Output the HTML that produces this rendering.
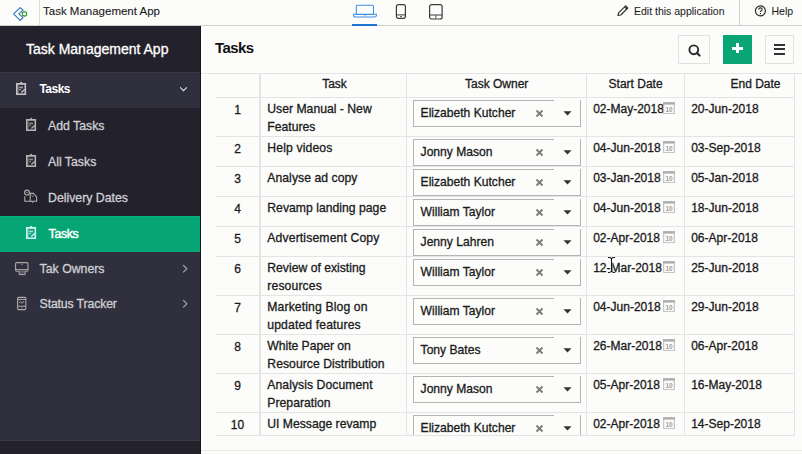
<!DOCTYPE html>
<html><head><meta charset="utf-8"><style>
html,body{margin:0;padding:0;width:802px;height:454px;overflow:hidden;background:#fcfcfa;}
body{position:relative;font-family:"Liberation Sans",sans-serif;}
.r{position:absolute;}
.t{position:absolute;white-space:nowrap;font-family:"Liberation Sans",sans-serif;}
</style></head><body>
<div class="r" style="left:0px;top:0px;width:802px;height:25px;background:#fcfcfa;"></div>
<div class="r" style="left:0px;top:25px;width:802px;height:1px;background:#cfcfcf;"></div>
<div class="r" style="left:39px;top:0px;width:1px;height:25px;background:#dcdcdc;"></div>
<div class="r" style="left:739px;top:0px;width:1px;height:25px;background:#cfcfcf;"></div>
<svg class="r" style="left:0px;top:0px" width="40" height="25" viewBox="0 0 40 25">
<path d="M20.2 7.6 L13.6 13.9 L20.2 20.3 L23.1 17.6 L18.8 13.9 L23.1 10.2 Z" fill="none" stroke="#2f74c4" stroke-width="1.1" stroke-linejoin="round"/>
<path d="M24.5 11.5 L26.6 12.7 L26.6 15.1 L24.5 16.3 L22.4 15.1 L22.4 12.7 Z" fill="none" stroke="#2e9e35" stroke-width="1.15"/>
</svg>
<div class="t" style="left:43px;top:6.27px;font-size:11.5px;line-height:11.5px;color:#1a1a1a;font-weight:400;letter-spacing:0px;-webkit-text-stroke:0.1px #1a1a1a;">Task Management App</div>
<svg class="r" style="left:352px;top:3px" width="26" height="16" viewBox="0 0 26 16">
<rect x="4.3" y="2.2" width="17.2" height="9.2" rx="1.2" fill="none" stroke="#3c8fe6" stroke-width="1.05"/>
<path d="M1.6 11.3 H24.4 V12.4 Q24.4 14 22.4 14 H3.6 Q1.6 14 1.6 12.4 Z" fill="none" stroke="#3c8fe6" stroke-width="1.05"/>
<rect x="11.5" y="11.4" width="3" height="0.9" fill="#3c8fe6"/>
</svg>
<div class="r" style="left:352px;top:24px;width:25px;height:2px;background:#1f73d2;"></div>
<svg class="r" style="left:395px;top:3px" width="12" height="17" viewBox="0 0 12 17">
<rect x="1.4" y="1.7" width="9" height="13.6" rx="2" fill="none" stroke="#3a3a3a" stroke-width="1.2"/>
<line x1="1.4" y1="11.9" x2="10.4" y2="11.9" stroke="#3a3a3a" stroke-width="1"/>
<rect x="5" y="13.2" width="2" height="0.9" fill="#3a3a3a"/>
</svg>
<svg class="r" style="left:428px;top:3px" width="16" height="17" viewBox="0 0 16 17">
<rect x="1.6" y="1.6" width="12.5" height="14.4" rx="2" fill="none" stroke="#3a3a3a" stroke-width="1.2"/>
<line x1="1.6" y1="12" x2="14.1" y2="12" stroke="#3a3a3a" stroke-width="1"/>
<rect x="7.4" y="12.2" width="0.9" height="3.3" fill="#3a3a3a"/>
</svg>
<svg class="r" style="left:616px;top:4px" width="14" height="13" viewBox="0 0 14 13">
<path d="M2 11.5 L2.6 8.8 L9.6 1.8 L11.8 4 L4.8 11 Z M8.6 2.8 L10.8 5" fill="none" stroke="#333" stroke-width="1.2" stroke-linejoin="round"/>
</svg>
<div class="t" style="left:634px;top:6.11px;font-size:10.5px;line-height:10.5px;color:#1a1a1a;font-weight:400;letter-spacing:0px;-webkit-text-stroke:0.05px #1a1a1a;">Edit this application</div>
<svg class="r" style="left:754px;top:5px" width="13" height="13" viewBox="0 0 13 13">
<circle cx="6.4" cy="5.9" r="5" fill="none" stroke="#2a2a2a" stroke-width="1.2"/>
<path d="M4.7 4.6 Q4.8 2.9 6.4 2.9 Q8.1 2.9 8.1 4.5 Q8.1 5.5 6.9 6 Q6.4 6.3 6.4 7.1" fill="none" stroke="#2a2a2a" stroke-width="1.1"/>
<rect x="5.8" y="8" width="1.2" height="1.2" fill="#2a2a2a"/>
</svg>
<div class="t" style="left:771.5px;top:6.11px;font-size:10.5px;line-height:10.5px;color:#1a1a1a;font-weight:400;letter-spacing:0px;-webkit-text-stroke:0.05px #1a1a1a;">Help</div>
<div class="r" style="left:0px;top:26px;width:201px;height:46px;background:#23222c;"></div>
<div class="r" style="left:0px;top:72px;width:201px;height:1px;background:#3a383d;"></div>
<div class="r" style="left:0px;top:73px;width:201px;height:35px;background:#302f3d;"></div>
<div class="r" style="left:0px;top:108px;width:201px;height:107px;background:#23222c;"></div>
<div class="r" style="left:0px;top:215px;width:201px;height:1px;background:#261d2a;"></div>
<div class="r" style="left:0px;top:216px;width:201px;height:36px;background:#05a673;"></div>
<div class="r" style="left:0px;top:216px;width:201px;height:1px;background:#02b27b;"></div>
<div class="r" style="left:0px;top:251px;width:201px;height:1px;background:#02b27b;"></div>
<div class="r" style="left:0px;top:252px;width:201px;height:1px;background:#33283a;"></div>
<div class="r" style="left:0px;top:253px;width:201px;height:187px;background:#302f3d;"></div>
<div class="r" style="left:0px;top:440px;width:201px;height:1px;background:#3e383d;"></div>
<div class="r" style="left:0px;top:441px;width:201px;height:13px;background:#23222c;"></div>
<div class="r" style="left:200px;top:26px;width:1px;height:428px;background:#15151f;"></div>
<div class="t" style="left:26px;top:41.75px;font-size:14px;line-height:14px;color:#ffffff;font-weight:400;letter-spacing:0px;-webkit-text-stroke:0.3px #ffffff;">Task Management App</div>
<svg class="r" style="left:15.2px;top:81px" width="13" height="15" viewBox="0 0 13 15"><rect x="1" y="2" width="10.1" height="12" fill="#c4c4c4"/><rect x="2.6" y="3.6" width="6.9" height="8.8" fill="#302f3d"/><path d="M6.2 0.4 L3.6 3.6 H8.8 Z" fill="#c4c4c4"/><rect x="2.6" y="3.6" width="1.1" height="8.8" fill="#c4c4c4" opacity="0.5"/><rect x="4.2" y="5.6" width="3.8" height="1.7" fill="#c4c4c4" opacity="0.75"/><rect x="4.2" y="8.3" width="1.8" height="0.9" fill="#c4c4c4"/><path d="M6.4 11.6 L9.6 8.4" stroke="#c4c4c4" stroke-width="1.4"/></svg>
<div class="t" style="left:39.4px;top:82.84px;font-size:12px;line-height:12px;color:#ffffff;font-weight:700;letter-spacing:-0.5px;-webkit-text-stroke:0px #ffffff;">Tasks</div>
<svg class="r" style="left:179px;top:85px" width="10" height="8" viewBox="0 0 10 8"><path d="M1.2 2.3 L4.5 5.6 L7.8 2.3" fill="none" stroke="#e0e0e6" stroke-width="1.15"/></svg>
<svg class="r" style="left:24.6px;top:117px" width="13" height="15" viewBox="0 0 13 15"><rect x="1" y="2" width="10.1" height="12" fill="#b4b4b4"/><rect x="2.6" y="3.6" width="6.9" height="8.8" fill="#23222c"/><path d="M6.2 0.4 L3.6 3.6 H8.8 Z" fill="#b4b4b4"/><rect x="2.6" y="3.6" width="1.1" height="8.8" fill="#b4b4b4" opacity="0.5"/><rect x="4.2" y="5.6" width="3.8" height="1.7" fill="#b4b4b4" opacity="0.75"/><rect x="4.2" y="8.3" width="1.8" height="0.9" fill="#b4b4b4"/><path d="M6.4 11.6 L9.6 8.4" stroke="#b4b4b4" stroke-width="1.4"/></svg>
<div class="t" style="left:48px;top:119.89px;font-size:12.3px;line-height:12.3px;color:#cfcfd4;font-weight:400;letter-spacing:0px;-webkit-text-stroke:0.3px #cfcfd4;">Add Tasks</div>
<svg class="r" style="left:24.6px;top:153px" width="13" height="15" viewBox="0 0 13 15"><rect x="1" y="2" width="10.1" height="12" fill="#b4b4b4"/><rect x="2.6" y="3.6" width="6.9" height="8.8" fill="#23222c"/><path d="M6.2 0.4 L3.6 3.6 H8.8 Z" fill="#b4b4b4"/><rect x="2.6" y="3.6" width="1.1" height="8.8" fill="#b4b4b4" opacity="0.5"/><rect x="4.2" y="5.6" width="3.8" height="1.7" fill="#b4b4b4" opacity="0.75"/><rect x="4.2" y="8.3" width="1.8" height="0.9" fill="#b4b4b4"/><path d="M6.4 11.6 L9.6 8.4" stroke="#b4b4b4" stroke-width="1.4"/></svg>
<div class="t" style="left:48px;top:155.69px;font-size:12.3px;line-height:12.3px;color:#cfcfd4;font-weight:400;letter-spacing:0px;-webkit-text-stroke:0.3px #cfcfd4;">All Tasks</div>
<svg class="r" style="left:20px;top:187px" width="22" height="22" viewBox="0 0 22 22">
<circle cx="7" cy="5.6" r="2.5" fill="none" stroke="#b0b0b0" stroke-width="1.1"/>
<circle cx="7" cy="5.4" r="0.7" fill="#b0b0b0"/>
<path d="M4.8 9.2 V14.2 H16.6 V10 L13.4 6.4 H10.2 V14.2" fill="none" stroke="#b0b0b0" stroke-width="1.1"/>
<path d="M11.8 8.3 L13.4 10" fill="none" stroke="#b0b0b0" stroke-width="0.9"/>
<path d="M11.2 14.2 Q12.6 17 14 14.2" fill="none" stroke="#b0b0b0" stroke-width="1"/>
</svg>
<div class="t" style="left:48px;top:191.59px;font-size:12.3px;line-height:12.3px;color:#cfcfd4;font-weight:400;letter-spacing:0px;-webkit-text-stroke:0.3px #cfcfd4;">Delivery Dates</div>
<svg class="r" style="left:25px;top:225px" width="13" height="15" viewBox="0 0 13 15"><rect x="1" y="2" width="10.1" height="12" fill="#d6f3f8"/><rect x="2.6" y="3.6" width="6.9" height="8.8" fill="#05a673"/><path d="M6.2 0.4 L3.6 3.6 H8.8 Z" fill="#d6f3f8"/><rect x="2.6" y="3.6" width="1.1" height="8.8" fill="#d6f3f8" opacity="0.5"/><rect x="4.2" y="5.6" width="3.8" height="1.7" fill="#d6f3f8" opacity="0.75"/><rect x="4.2" y="8.3" width="1.8" height="0.9" fill="#d6f3f8"/><path d="M6.4 11.6 L9.6 8.4" stroke="#d6f3f8" stroke-width="1.4"/></svg>
<div class="t" style="left:48.6px;top:227.79px;font-size:12.3px;line-height:12.3px;color:#ffffff;font-weight:400;letter-spacing:-0.35px;-webkit-text-stroke:0.45px #ffffff;">Tasks</div>
<svg class="r" style="left:11px;top:258px" width="22" height="22" viewBox="0 0 22 22">
<rect x="4.6" y="4.6" width="12.4" height="8.7" rx="1.2" fill="none" stroke="#aaaaaa" stroke-width="1.1"/>
<line x1="4.6" y1="11.6" x2="17" y2="11.6" stroke="#aaaaaa" stroke-width="1"/>
<rect x="10.2" y="5.8" width="1.4" height="0.9" fill="#aaaaaa"/>
<path d="M8.2 13.3 V16.6 H14.2 V13.3" fill="#55535c" stroke="#aaaaaa" stroke-width="1"/>
</svg>
<div class="t" style="left:39.6px;top:262.59px;font-size:12.3px;line-height:12.3px;color:#cfcfd4;font-weight:400;letter-spacing:0px;-webkit-text-stroke:0.3px #cfcfd4;">Tak Owners</div>
<svg class="r" style="left:181px;top:264px" width="8" height="10" viewBox="0 0 8 10"><path d="M2.2 1.2 L5.8 4.8 L2.2 8.4" fill="none" stroke="#a8a8b0" stroke-width="1.2"/></svg>
<svg class="r" style="left:11px;top:292px" width="22" height="22" viewBox="0 0 22 22">
<rect x="6.6" y="5.4" width="8.2" height="12.2" rx="1" fill="none" stroke="#aaaaaa" stroke-width="1.1"/>
<line x1="6.6" y1="7.4" x2="14.8" y2="7.4" stroke="#aaaaaa" stroke-width="1"/>
<line x1="6.6" y1="14.2" x2="14.8" y2="14.2" stroke="#aaaaaa" stroke-width="1"/>
<path d="M8 10.8 L9.4 9.6 L11.3 11.4 L12.8 9.2" fill="none" stroke="#aaaaaa" stroke-width="1"/>
<rect x="10.3" y="15.2" width="1" height="1.2" fill="#aaaaaa"/>
</svg>
<div class="t" style="left:39.6px;top:297.69px;font-size:12.3px;line-height:12.3px;color:#cfcfd4;font-weight:400;letter-spacing:-0.15px;-webkit-text-stroke:0.3px #cfcfd4;">Status Tracker</div>
<svg class="r" style="left:181px;top:299px" width="8" height="10" viewBox="0 0 8 10"><path d="M2.2 1.2 L5.8 4.8 L2.2 8.4" fill="none" stroke="#a8a8b0" stroke-width="1.2"/></svg>
<div class="r" style="left:201px;top:26px;width:601px;height:428px;background:#fcfcfa;"></div>
<div class="t" style="left:215px;top:39.90px;font-size:15px;line-height:15px;color:#111;font-weight:700;letter-spacing:-0.6px;-webkit-text-stroke:0px #111;">Tasks</div>
<div class="r" style="left:678px;top:35px;width:32px;height:29px;background:#fcfcfa;box-sizing:border-box;border:1px solid #e2e2e2;"></div>
<svg class="r" style="left:686px;top:42px" width="16" height="16" viewBox="0 0 16 16"><circle cx="7.8" cy="7.8" r="4.4" fill="none" stroke="#2a2a2a" stroke-width="1.9"/><path d="M10.9 10.9 L13.6 13.6" stroke="#2a2a2a" stroke-width="2.1" stroke-linecap="round"/></svg>
<div class="r" style="left:723px;top:35px;width:29px;height:29px;background:#0aa574;"></div>
<div class="r" style="left:732.3px;top:46.9px;width:10.6px;height:2.7px;background:#ffffff;"></div>
<div class="r" style="left:736.2px;top:42.9px;width:2.7px;height:10.6px;background:#ffffff;"></div>
<div class="r" style="left:765px;top:35px;width:29px;height:29px;background:#fcfcfa;box-sizing:border-box;border:1px solid #e2e2e2;"></div>
<div class="r" style="left:773.8px;top:44.3px;width:11.2px;height:2px;background:#333;"></div>
<div class="r" style="left:773.8px;top:48.4px;width:11.2px;height:2px;background:#333;"></div>
<div class="r" style="left:773.8px;top:52.5px;width:11.2px;height:2px;background:#333;"></div>
<div class="r" style="left:201px;top:73px;width:601px;height:1px;background:#e4e4e4;"></div>
<div class="r" style="left:216px;top:97px;width:579px;height:1px;background:#e4e4e4;"></div>
<div class="r" style="left:216px;top:136px;width:579px;height:1px;background:#e4e4e4;"></div>
<div class="r" style="left:216px;top:166px;width:579px;height:1px;background:#e4e4e4;"></div>
<div class="r" style="left:216px;top:196px;width:579px;height:1px;background:#e4e4e4;"></div>
<div class="r" style="left:216px;top:226px;width:579px;height:1px;background:#e4e4e4;"></div>
<div class="r" style="left:216px;top:256px;width:579px;height:1px;background:#e4e4e4;"></div>
<div class="r" style="left:216px;top:295px;width:579px;height:1px;background:#e4e4e4;"></div>
<div class="r" style="left:216px;top:334px;width:579px;height:1px;background:#e4e4e4;"></div>
<div class="r" style="left:216px;top:373px;width:579px;height:1px;background:#e4e4e4;"></div>
<div class="r" style="left:216px;top:412px;width:579px;height:1px;background:#e4e4e4;"></div>
<div class="r" style="left:216px;top:435px;width:579px;height:1px;background:#e4e4e4;"></div>
<div class="r" style="left:201px;top:450px;width:601px;height:1px;background:#e8e8e8;"></div>
<div class="r" style="left:259px;top:73px;width:2px;height:363px;background:#e4e4e4;"></div>
<div class="r" style="left:406px;top:73px;width:1px;height:363px;background:#e4e4e4;"></div>
<div class="r" style="left:586px;top:73px;width:1px;height:363px;background:#e4e4e4;"></div>
<div class="r" style="left:684px;top:73px;width:1px;height:363px;background:#e4e4e4;"></div>
<div class="r" style="left:794px;top:73px;width:1px;height:363px;background:#e4e4e4;"></div>
<div class="t" style="left:322.2px;top:77.64px;font-size:12px;line-height:12px;color:#1a1a1a;font-weight:400;letter-spacing:0px;-webkit-text-stroke:0.3px #1a1a1a;">Task</div>
<div class="t" style="left:465px;top:77.64px;font-size:12px;line-height:12px;color:#1a1a1a;font-weight:400;letter-spacing:0px;-webkit-text-stroke:0.3px #1a1a1a;">Task Owner</div>
<div class="t" style="left:608.6px;top:77.64px;font-size:12px;line-height:12px;color:#1a1a1a;font-weight:400;letter-spacing:0px;-webkit-text-stroke:0.3px #1a1a1a;">Start Date</div>
<div class="t" style="left:730.5px;top:77.64px;font-size:12px;line-height:12px;color:#1a1a1a;font-weight:400;letter-spacing:0px;-webkit-text-stroke:0.3px #1a1a1a;">End Date</div>
<div class="t" style="left:216px;width:43px;text-align:center;top:103.60px;font-size:12px;line-height:12px;color:#1a1a1a;-webkit-text-stroke:0.3px #1a1a1a">1</div>
<div class="t" style="left:267.3px;top:103.47px;font-size:12.2px;line-height:12.2px;color:#1a1a1a;font-weight:400;letter-spacing:0.005px;-webkit-text-stroke:0.3px #1a1a1a;">User Manual - New</div>
<div class="t" style="left:267.3px;top:121.47px;font-size:12.2px;line-height:12.2px;color:#1a1a1a;font-weight:400;letter-spacing:0px;-webkit-text-stroke:0.3px #1a1a1a;">Features</div>
<div class="r" style="left:414px;top:101px;width:166px;height:25px;background:#fcfcfa;"></div>
<div class="r" style="left:413px;top:100px;width:141px;height:1px;background:#b4b4b4;"></div>
<div class="r" style="left:413px;top:100px;width:1px;height:27px;background:#b4b4b4;"></div>
<div class="r" style="left:580px;top:100px;width:1px;height:27px;background:#b4b4b4;"></div>
<div class="r" style="left:413px;top:126px;width:168px;height:1px;background:#b4b4b4;"></div>
<div class="t" style="left:420.6px;top:106.56px;font-size:12.1px;line-height:12.1px;color:#1a1a1a;font-weight:400;letter-spacing:0px;-webkit-text-stroke:0.3px #1a1a1a;">Elizabeth Kutcher</div>
<svg class="r" style="left:535px;top:109px" width="9" height="9" viewBox="0 0 9 9"><path d="M1.5 1.5 L7.5 7.5 M7.5 1.5 L1.5 7.5" stroke="#7a7a7a" stroke-width="1.8"/></svg>
<svg class="r" style="left:563px;top:111px" width="9" height="5" viewBox="0 0 9 5"><path d="M0.5 0.3 H8.5 L4.5 4.6 Z" fill="#333"/></svg>
<div class="t" style="left:593.2px;top:103.14px;font-size:12px;line-height:12px;color:#1a1a1a;font-weight:400;letter-spacing:0px;-webkit-text-stroke:0.3px #1a1a1a;">02-May-2018</div>
<svg class="r" style="left:663px;top:102px" width="12" height="12" viewBox="0 0 12 12"><rect x="0.7" y="1" width="10.6" height="10.7" fill="none" stroke="#b8b8b8" stroke-width="1"/><rect x="0.2" y="0" width="11.6" height="2.6" fill="#adadad"/><rect x="1.8" y="0" width="0.8" height="0.7" fill="#e0e0e0"/><rect x="5.2" y="0" width="0.8" height="0.7" fill="#e0e0e0"/><rect x="8.8" y="0" width="0.8" height="0.7" fill="#e0e0e0"/><text x="6.1" y="9.7" font-family="Liberation Sans" font-size="6.4" font-weight="bold" fill="#a0a0a0" text-anchor="middle">10</text></svg>
<div class="t" style="left:691.2px;top:103.14px;font-size:12px;line-height:12px;color:#1a1a1a;font-weight:400;letter-spacing:0px;-webkit-text-stroke:0.3px #1a1a1a;">20-Jun-2018</div>
<div class="t" style="left:216px;width:43px;text-align:center;top:142.60px;font-size:12px;line-height:12px;color:#1a1a1a;-webkit-text-stroke:0.3px #1a1a1a">2</div>
<div class="t" style="left:267.3px;top:142.47px;font-size:12.2px;line-height:12.2px;color:#1a1a1a;font-weight:400;letter-spacing:0.131px;-webkit-text-stroke:0.3px #1a1a1a;">Help videos</div>
<div class="r" style="left:414px;top:140px;width:166px;height:25px;background:#fcfcfa;"></div>
<div class="r" style="left:413px;top:139px;width:141px;height:1px;background:#b4b4b4;"></div>
<div class="r" style="left:413px;top:139px;width:1px;height:27px;background:#b4b4b4;"></div>
<div class="r" style="left:580px;top:139px;width:1px;height:27px;background:#b4b4b4;"></div>
<div class="r" style="left:413px;top:165px;width:168px;height:1px;background:#b4b4b4;"></div>
<div class="t" style="left:420.6px;top:145.56px;font-size:12.1px;line-height:12.1px;color:#1a1a1a;font-weight:400;letter-spacing:0px;-webkit-text-stroke:0.3px #1a1a1a;">Jonny Mason</div>
<svg class="r" style="left:535px;top:148px" width="9" height="9" viewBox="0 0 9 9"><path d="M1.5 1.5 L7.5 7.5 M7.5 1.5 L1.5 7.5" stroke="#7a7a7a" stroke-width="1.8"/></svg>
<svg class="r" style="left:563px;top:150px" width="9" height="5" viewBox="0 0 9 5"><path d="M0.5 0.3 H8.5 L4.5 4.6 Z" fill="#333"/></svg>
<div class="t" style="left:593.2px;top:142.14px;font-size:12px;line-height:12px;color:#1a1a1a;font-weight:400;letter-spacing:0px;-webkit-text-stroke:0.3px #1a1a1a;">04-Jun-2018</div>
<svg class="r" style="left:663px;top:141px" width="12" height="12" viewBox="0 0 12 12"><rect x="0.7" y="1" width="10.6" height="10.7" fill="none" stroke="#b8b8b8" stroke-width="1"/><rect x="0.2" y="0" width="11.6" height="2.6" fill="#adadad"/><rect x="1.8" y="0" width="0.8" height="0.7" fill="#e0e0e0"/><rect x="5.2" y="0" width="0.8" height="0.7" fill="#e0e0e0"/><rect x="8.8" y="0" width="0.8" height="0.7" fill="#e0e0e0"/><text x="6.1" y="9.7" font-family="Liberation Sans" font-size="6.4" font-weight="bold" fill="#a0a0a0" text-anchor="middle">10</text></svg>
<div class="t" style="left:691.2px;top:142.14px;font-size:12px;line-height:12px;color:#1a1a1a;font-weight:400;letter-spacing:0px;-webkit-text-stroke:0.3px #1a1a1a;">03-Sep-2018</div>
<div class="t" style="left:216px;width:43px;text-align:center;top:172.60px;font-size:12px;line-height:12px;color:#1a1a1a;-webkit-text-stroke:0.3px #1a1a1a">3</div>
<div class="t" style="left:267.3px;top:172.47px;font-size:12.2px;line-height:12.2px;color:#1a1a1a;font-weight:400;letter-spacing:0.047px;-webkit-text-stroke:0.3px #1a1a1a;">Analyse ad copy</div>
<div class="r" style="left:414px;top:170px;width:166px;height:25px;background:#fcfcfa;"></div>
<div class="r" style="left:413px;top:169px;width:141px;height:1px;background:#b4b4b4;"></div>
<div class="r" style="left:413px;top:169px;width:1px;height:27px;background:#b4b4b4;"></div>
<div class="r" style="left:580px;top:169px;width:1px;height:27px;background:#b4b4b4;"></div>
<div class="r" style="left:413px;top:195px;width:168px;height:1px;background:#b4b4b4;"></div>
<div class="t" style="left:420.6px;top:175.56px;font-size:12.1px;line-height:12.1px;color:#1a1a1a;font-weight:400;letter-spacing:0px;-webkit-text-stroke:0.3px #1a1a1a;">Elizabeth Kutcher</div>
<svg class="r" style="left:535px;top:178px" width="9" height="9" viewBox="0 0 9 9"><path d="M1.5 1.5 L7.5 7.5 M7.5 1.5 L1.5 7.5" stroke="#7a7a7a" stroke-width="1.8"/></svg>
<svg class="r" style="left:563px;top:180px" width="9" height="5" viewBox="0 0 9 5"><path d="M0.5 0.3 H8.5 L4.5 4.6 Z" fill="#333"/></svg>
<div class="t" style="left:593.2px;top:172.14px;font-size:12px;line-height:12px;color:#1a1a1a;font-weight:400;letter-spacing:0px;-webkit-text-stroke:0.3px #1a1a1a;">03-Jan-2018</div>
<svg class="r" style="left:663px;top:171px" width="12" height="12" viewBox="0 0 12 12"><rect x="0.7" y="1" width="10.6" height="10.7" fill="none" stroke="#b8b8b8" stroke-width="1"/><rect x="0.2" y="0" width="11.6" height="2.6" fill="#adadad"/><rect x="1.8" y="0" width="0.8" height="0.7" fill="#e0e0e0"/><rect x="5.2" y="0" width="0.8" height="0.7" fill="#e0e0e0"/><rect x="8.8" y="0" width="0.8" height="0.7" fill="#e0e0e0"/><text x="6.1" y="9.7" font-family="Liberation Sans" font-size="6.4" font-weight="bold" fill="#a0a0a0" text-anchor="middle">10</text></svg>
<div class="t" style="left:691.2px;top:172.14px;font-size:12px;line-height:12px;color:#1a1a1a;font-weight:400;letter-spacing:0px;-webkit-text-stroke:0.3px #1a1a1a;">05-Jan-2018</div>
<div class="t" style="left:216px;width:43px;text-align:center;top:202.60px;font-size:12px;line-height:12px;color:#1a1a1a;-webkit-text-stroke:0.3px #1a1a1a">4</div>
<div class="t" style="left:267.3px;top:202.47px;font-size:12.2px;line-height:12.2px;color:#1a1a1a;font-weight:400;letter-spacing:0.018px;-webkit-text-stroke:0.3px #1a1a1a;">Revamp landing page</div>
<div class="r" style="left:414px;top:200px;width:166px;height:25px;background:#fcfcfa;"></div>
<div class="r" style="left:413px;top:199px;width:141px;height:1px;background:#b4b4b4;"></div>
<div class="r" style="left:413px;top:199px;width:1px;height:27px;background:#b4b4b4;"></div>
<div class="r" style="left:580px;top:199px;width:1px;height:27px;background:#b4b4b4;"></div>
<div class="r" style="left:413px;top:225px;width:168px;height:1px;background:#b4b4b4;"></div>
<div class="t" style="left:420.6px;top:205.56px;font-size:12.1px;line-height:12.1px;color:#1a1a1a;font-weight:400;letter-spacing:0px;-webkit-text-stroke:0.3px #1a1a1a;">William Taylor</div>
<svg class="r" style="left:535px;top:208px" width="9" height="9" viewBox="0 0 9 9"><path d="M1.5 1.5 L7.5 7.5 M7.5 1.5 L1.5 7.5" stroke="#7a7a7a" stroke-width="1.8"/></svg>
<svg class="r" style="left:563px;top:210px" width="9" height="5" viewBox="0 0 9 5"><path d="M0.5 0.3 H8.5 L4.5 4.6 Z" fill="#333"/></svg>
<div class="t" style="left:593.2px;top:202.14px;font-size:12px;line-height:12px;color:#1a1a1a;font-weight:400;letter-spacing:0px;-webkit-text-stroke:0.3px #1a1a1a;">04-Jun-2018</div>
<svg class="r" style="left:663px;top:201px" width="12" height="12" viewBox="0 0 12 12"><rect x="0.7" y="1" width="10.6" height="10.7" fill="none" stroke="#b8b8b8" stroke-width="1"/><rect x="0.2" y="0" width="11.6" height="2.6" fill="#adadad"/><rect x="1.8" y="0" width="0.8" height="0.7" fill="#e0e0e0"/><rect x="5.2" y="0" width="0.8" height="0.7" fill="#e0e0e0"/><rect x="8.8" y="0" width="0.8" height="0.7" fill="#e0e0e0"/><text x="6.1" y="9.7" font-family="Liberation Sans" font-size="6.4" font-weight="bold" fill="#a0a0a0" text-anchor="middle">10</text></svg>
<div class="t" style="left:691.2px;top:202.14px;font-size:12px;line-height:12px;color:#1a1a1a;font-weight:400;letter-spacing:0px;-webkit-text-stroke:0.3px #1a1a1a;">18-Jun-2018</div>
<div class="t" style="left:216px;width:43px;text-align:center;top:232.60px;font-size:12px;line-height:12px;color:#1a1a1a;-webkit-text-stroke:0.3px #1a1a1a">5</div>
<div class="t" style="left:267.3px;top:232.47px;font-size:12.2px;line-height:12.2px;color:#1a1a1a;font-weight:400;letter-spacing:0.138px;-webkit-text-stroke:0.3px #1a1a1a;">Advertisement Copy</div>
<div class="r" style="left:414px;top:230px;width:166px;height:25px;background:#fcfcfa;"></div>
<div class="r" style="left:413px;top:229px;width:141px;height:1px;background:#b4b4b4;"></div>
<div class="r" style="left:413px;top:229px;width:1px;height:27px;background:#b4b4b4;"></div>
<div class="r" style="left:580px;top:229px;width:1px;height:27px;background:#b4b4b4;"></div>
<div class="r" style="left:413px;top:255px;width:168px;height:1px;background:#b4b4b4;"></div>
<div class="t" style="left:420.6px;top:235.56px;font-size:12.1px;line-height:12.1px;color:#1a1a1a;font-weight:400;letter-spacing:0px;-webkit-text-stroke:0.3px #1a1a1a;">Jenny Lahren</div>
<svg class="r" style="left:535px;top:238px" width="9" height="9" viewBox="0 0 9 9"><path d="M1.5 1.5 L7.5 7.5 M7.5 1.5 L1.5 7.5" stroke="#7a7a7a" stroke-width="1.8"/></svg>
<svg class="r" style="left:563px;top:240px" width="9" height="5" viewBox="0 0 9 5"><path d="M0.5 0.3 H8.5 L4.5 4.6 Z" fill="#333"/></svg>
<div class="t" style="left:593.2px;top:232.14px;font-size:12px;line-height:12px;color:#1a1a1a;font-weight:400;letter-spacing:0px;-webkit-text-stroke:0.3px #1a1a1a;">02-Apr-2018</div>
<svg class="r" style="left:663px;top:231px" width="12" height="12" viewBox="0 0 12 12"><rect x="0.7" y="1" width="10.6" height="10.7" fill="none" stroke="#b8b8b8" stroke-width="1"/><rect x="0.2" y="0" width="11.6" height="2.6" fill="#adadad"/><rect x="1.8" y="0" width="0.8" height="0.7" fill="#e0e0e0"/><rect x="5.2" y="0" width="0.8" height="0.7" fill="#e0e0e0"/><rect x="8.8" y="0" width="0.8" height="0.7" fill="#e0e0e0"/><text x="6.1" y="9.7" font-family="Liberation Sans" font-size="6.4" font-weight="bold" fill="#a0a0a0" text-anchor="middle">10</text></svg>
<div class="t" style="left:691.2px;top:232.14px;font-size:12px;line-height:12px;color:#1a1a1a;font-weight:400;letter-spacing:0px;-webkit-text-stroke:0.3px #1a1a1a;">06-Apr-2018</div>
<div class="t" style="left:216px;width:43px;text-align:center;top:262.60px;font-size:12px;line-height:12px;color:#1a1a1a;-webkit-text-stroke:0.3px #1a1a1a">6</div>
<div class="t" style="left:267.3px;top:262.47px;font-size:12.2px;line-height:12.2px;color:#1a1a1a;font-weight:400;letter-spacing:-0.002px;-webkit-text-stroke:0.3px #1a1a1a;">Review of existing</div>
<div class="t" style="left:267.3px;top:280.47px;font-size:12.2px;line-height:12.2px;color:#1a1a1a;font-weight:400;letter-spacing:0.123px;-webkit-text-stroke:0.3px #1a1a1a;">resources</div>
<div class="r" style="left:414px;top:260px;width:166px;height:25px;background:#fcfcfa;"></div>
<div class="r" style="left:413px;top:259px;width:141px;height:1px;background:#b4b4b4;"></div>
<div class="r" style="left:413px;top:259px;width:1px;height:27px;background:#b4b4b4;"></div>
<div class="r" style="left:580px;top:259px;width:1px;height:27px;background:#b4b4b4;"></div>
<div class="r" style="left:413px;top:285px;width:168px;height:1px;background:#b4b4b4;"></div>
<div class="t" style="left:420.6px;top:265.56px;font-size:12.1px;line-height:12.1px;color:#1a1a1a;font-weight:400;letter-spacing:0px;-webkit-text-stroke:0.3px #1a1a1a;">William Taylor</div>
<svg class="r" style="left:535px;top:268px" width="9" height="9" viewBox="0 0 9 9"><path d="M1.5 1.5 L7.5 7.5 M7.5 1.5 L1.5 7.5" stroke="#7a7a7a" stroke-width="1.8"/></svg>
<svg class="r" style="left:563px;top:270px" width="9" height="5" viewBox="0 0 9 5"><path d="M0.5 0.3 H8.5 L4.5 4.6 Z" fill="#333"/></svg>
<div class="t" style="left:593.2px;top:262.14px;font-size:12px;line-height:12px;color:#1a1a1a;font-weight:400;letter-spacing:0px;-webkit-text-stroke:0.3px #1a1a1a;">12-Mar-2018</div>
<svg class="r" style="left:663px;top:261px" width="12" height="12" viewBox="0 0 12 12"><rect x="0.7" y="1" width="10.6" height="10.7" fill="none" stroke="#b8b8b8" stroke-width="1"/><rect x="0.2" y="0" width="11.6" height="2.6" fill="#adadad"/><rect x="1.8" y="0" width="0.8" height="0.7" fill="#e0e0e0"/><rect x="5.2" y="0" width="0.8" height="0.7" fill="#e0e0e0"/><rect x="8.8" y="0" width="0.8" height="0.7" fill="#e0e0e0"/><text x="6.1" y="9.7" font-family="Liberation Sans" font-size="6.4" font-weight="bold" fill="#a0a0a0" text-anchor="middle">10</text></svg>
<div class="t" style="left:691.2px;top:262.14px;font-size:12px;line-height:12px;color:#1a1a1a;font-weight:400;letter-spacing:0px;-webkit-text-stroke:0.3px #1a1a1a;">25-Jun-2018</div>
<div class="t" style="left:216px;width:43px;text-align:center;top:301.60px;font-size:12px;line-height:12px;color:#1a1a1a;-webkit-text-stroke:0.3px #1a1a1a">7</div>
<div class="t" style="left:267.3px;top:301.47px;font-size:12.2px;line-height:12.2px;color:#1a1a1a;font-weight:400;letter-spacing:0.123px;-webkit-text-stroke:0.3px #1a1a1a;">Marketing Blog on</div>
<div class="t" style="left:267.3px;top:319.47px;font-size:12.2px;line-height:12.2px;color:#1a1a1a;font-weight:400;letter-spacing:0.128px;-webkit-text-stroke:0.3px #1a1a1a;">updated features</div>
<div class="r" style="left:414px;top:299px;width:166px;height:25px;background:#fcfcfa;"></div>
<div class="r" style="left:413px;top:298px;width:141px;height:1px;background:#b4b4b4;"></div>
<div class="r" style="left:413px;top:298px;width:1px;height:27px;background:#b4b4b4;"></div>
<div class="r" style="left:580px;top:298px;width:1px;height:27px;background:#b4b4b4;"></div>
<div class="r" style="left:413px;top:324px;width:168px;height:1px;background:#b4b4b4;"></div>
<div class="t" style="left:420.6px;top:304.56px;font-size:12.1px;line-height:12.1px;color:#1a1a1a;font-weight:400;letter-spacing:0px;-webkit-text-stroke:0.3px #1a1a1a;">William Taylor</div>
<svg class="r" style="left:535px;top:307px" width="9" height="9" viewBox="0 0 9 9"><path d="M1.5 1.5 L7.5 7.5 M7.5 1.5 L1.5 7.5" stroke="#7a7a7a" stroke-width="1.8"/></svg>
<svg class="r" style="left:563px;top:309px" width="9" height="5" viewBox="0 0 9 5"><path d="M0.5 0.3 H8.5 L4.5 4.6 Z" fill="#333"/></svg>
<div class="t" style="left:593.2px;top:301.14px;font-size:12px;line-height:12px;color:#1a1a1a;font-weight:400;letter-spacing:0px;-webkit-text-stroke:0.3px #1a1a1a;">04-Jun-2018</div>
<svg class="r" style="left:663px;top:300px" width="12" height="12" viewBox="0 0 12 12"><rect x="0.7" y="1" width="10.6" height="10.7" fill="none" stroke="#b8b8b8" stroke-width="1"/><rect x="0.2" y="0" width="11.6" height="2.6" fill="#adadad"/><rect x="1.8" y="0" width="0.8" height="0.7" fill="#e0e0e0"/><rect x="5.2" y="0" width="0.8" height="0.7" fill="#e0e0e0"/><rect x="8.8" y="0" width="0.8" height="0.7" fill="#e0e0e0"/><text x="6.1" y="9.7" font-family="Liberation Sans" font-size="6.4" font-weight="bold" fill="#a0a0a0" text-anchor="middle">10</text></svg>
<div class="t" style="left:691.2px;top:301.14px;font-size:12px;line-height:12px;color:#1a1a1a;font-weight:400;letter-spacing:0px;-webkit-text-stroke:0.3px #1a1a1a;">29-Jun-2018</div>
<div class="t" style="left:216px;width:43px;text-align:center;top:340.60px;font-size:12px;line-height:12px;color:#1a1a1a;-webkit-text-stroke:0.3px #1a1a1a">8</div>
<div class="t" style="left:267.3px;top:340.47px;font-size:12.2px;line-height:12.2px;color:#1a1a1a;font-weight:400;letter-spacing:-0.04px;-webkit-text-stroke:0.3px #1a1a1a;">White Paper on</div>
<div class="t" style="left:267.3px;top:358.47px;font-size:12.2px;line-height:12.2px;color:#1a1a1a;font-weight:400;letter-spacing:0.034px;-webkit-text-stroke:0.3px #1a1a1a;">Resource Distribution</div>
<div class="r" style="left:414px;top:338px;width:166px;height:25px;background:#fcfcfa;"></div>
<div class="r" style="left:413px;top:337px;width:141px;height:1px;background:#b4b4b4;"></div>
<div class="r" style="left:413px;top:337px;width:1px;height:27px;background:#b4b4b4;"></div>
<div class="r" style="left:580px;top:337px;width:1px;height:27px;background:#b4b4b4;"></div>
<div class="r" style="left:413px;top:363px;width:168px;height:1px;background:#b4b4b4;"></div>
<div class="t" style="left:420.6px;top:343.56px;font-size:12.1px;line-height:12.1px;color:#1a1a1a;font-weight:400;letter-spacing:0px;-webkit-text-stroke:0.3px #1a1a1a;">Tony Bates</div>
<svg class="r" style="left:535px;top:346px" width="9" height="9" viewBox="0 0 9 9"><path d="M1.5 1.5 L7.5 7.5 M7.5 1.5 L1.5 7.5" stroke="#7a7a7a" stroke-width="1.8"/></svg>
<svg class="r" style="left:563px;top:348px" width="9" height="5" viewBox="0 0 9 5"><path d="M0.5 0.3 H8.5 L4.5 4.6 Z" fill="#333"/></svg>
<div class="t" style="left:593.2px;top:340.14px;font-size:12px;line-height:12px;color:#1a1a1a;font-weight:400;letter-spacing:0px;-webkit-text-stroke:0.3px #1a1a1a;">26-Mar-2018</div>
<svg class="r" style="left:663px;top:339px" width="12" height="12" viewBox="0 0 12 12"><rect x="0.7" y="1" width="10.6" height="10.7" fill="none" stroke="#b8b8b8" stroke-width="1"/><rect x="0.2" y="0" width="11.6" height="2.6" fill="#adadad"/><rect x="1.8" y="0" width="0.8" height="0.7" fill="#e0e0e0"/><rect x="5.2" y="0" width="0.8" height="0.7" fill="#e0e0e0"/><rect x="8.8" y="0" width="0.8" height="0.7" fill="#e0e0e0"/><text x="6.1" y="9.7" font-family="Liberation Sans" font-size="6.4" font-weight="bold" fill="#a0a0a0" text-anchor="middle">10</text></svg>
<div class="t" style="left:691.2px;top:340.14px;font-size:12px;line-height:12px;color:#1a1a1a;font-weight:400;letter-spacing:0px;-webkit-text-stroke:0.3px #1a1a1a;">06-Apr-2018</div>
<div class="t" style="left:216px;width:43px;text-align:center;top:379.60px;font-size:12px;line-height:12px;color:#1a1a1a;-webkit-text-stroke:0.3px #1a1a1a">9</div>
<div class="t" style="left:267.3px;top:379.47px;font-size:12.2px;line-height:12.2px;color:#1a1a1a;font-weight:400;letter-spacing:0.061px;-webkit-text-stroke:0.3px #1a1a1a;">Analysis Document</div>
<div class="t" style="left:267.3px;top:397.47px;font-size:12.2px;line-height:12.2px;color:#1a1a1a;font-weight:400;letter-spacing:0.028px;-webkit-text-stroke:0.3px #1a1a1a;">Preparation</div>
<div class="r" style="left:414px;top:377px;width:166px;height:25px;background:#fcfcfa;"></div>
<div class="r" style="left:413px;top:376px;width:141px;height:1px;background:#b4b4b4;"></div>
<div class="r" style="left:413px;top:376px;width:1px;height:27px;background:#b4b4b4;"></div>
<div class="r" style="left:580px;top:376px;width:1px;height:27px;background:#b4b4b4;"></div>
<div class="r" style="left:413px;top:402px;width:168px;height:1px;background:#b4b4b4;"></div>
<div class="t" style="left:420.6px;top:382.56px;font-size:12.1px;line-height:12.1px;color:#1a1a1a;font-weight:400;letter-spacing:0px;-webkit-text-stroke:0.3px #1a1a1a;">Jonny Mason</div>
<svg class="r" style="left:535px;top:385px" width="9" height="9" viewBox="0 0 9 9"><path d="M1.5 1.5 L7.5 7.5 M7.5 1.5 L1.5 7.5" stroke="#7a7a7a" stroke-width="1.8"/></svg>
<svg class="r" style="left:563px;top:387px" width="9" height="5" viewBox="0 0 9 5"><path d="M0.5 0.3 H8.5 L4.5 4.6 Z" fill="#333"/></svg>
<div class="t" style="left:593.2px;top:379.14px;font-size:12px;line-height:12px;color:#1a1a1a;font-weight:400;letter-spacing:0px;-webkit-text-stroke:0.3px #1a1a1a;">05-Apr-2018</div>
<svg class="r" style="left:663px;top:378px" width="12" height="12" viewBox="0 0 12 12"><rect x="0.7" y="1" width="10.6" height="10.7" fill="none" stroke="#b8b8b8" stroke-width="1"/><rect x="0.2" y="0" width="11.6" height="2.6" fill="#adadad"/><rect x="1.8" y="0" width="0.8" height="0.7" fill="#e0e0e0"/><rect x="5.2" y="0" width="0.8" height="0.7" fill="#e0e0e0"/><rect x="8.8" y="0" width="0.8" height="0.7" fill="#e0e0e0"/><text x="6.1" y="9.7" font-family="Liberation Sans" font-size="6.4" font-weight="bold" fill="#a0a0a0" text-anchor="middle">10</text></svg>
<div class="t" style="left:691.2px;top:379.14px;font-size:12px;line-height:12px;color:#1a1a1a;font-weight:400;letter-spacing:0px;-webkit-text-stroke:0.3px #1a1a1a;">16-May-2018</div>
<div class="t" style="left:216px;width:43px;text-align:center;top:418.60px;font-size:12px;line-height:12px;color:#1a1a1a;-webkit-text-stroke:0.3px #1a1a1a">10</div>
<div class="t" style="left:267.3px;top:418.47px;font-size:12.2px;line-height:12.2px;color:#1a1a1a;font-weight:400;letter-spacing:-0.01px;-webkit-text-stroke:0.3px #1a1a1a;">UI Message revamp</div>
<div class="r" style="left:414px;top:416px;width:166px;height:25px;background:#fcfcfa;"></div>
<div class="r" style="left:413px;top:415px;width:141px;height:1px;background:#b4b4b4;"></div>
<div class="r" style="left:413px;top:415px;width:1px;height:20px;background:#b4b4b4;"></div>
<div class="r" style="left:580px;top:415px;width:1px;height:20px;background:#b4b4b4;"></div>
<div class="t" style="left:420.6px;top:421.56px;font-size:12.1px;line-height:12.1px;color:#1a1a1a;font-weight:400;letter-spacing:0px;-webkit-text-stroke:0.3px #1a1a1a;">Elizabeth Kutcher</div>
<svg class="r" style="left:535px;top:424px" width="9" height="9" viewBox="0 0 9 9"><path d="M1.5 1.5 L7.5 7.5 M7.5 1.5 L1.5 7.5" stroke="#7a7a7a" stroke-width="1.8"/></svg>
<svg class="r" style="left:563px;top:426px" width="9" height="5" viewBox="0 0 9 5"><path d="M0.5 0.3 H8.5 L4.5 4.6 Z" fill="#333"/></svg>
<div class="t" style="left:593.2px;top:418.14px;font-size:12px;line-height:12px;color:#1a1a1a;font-weight:400;letter-spacing:0px;-webkit-text-stroke:0.3px #1a1a1a;">02-Apr-2018</div>
<svg class="r" style="left:663px;top:417px" width="12" height="12" viewBox="0 0 12 12"><rect x="0.7" y="1" width="10.6" height="10.7" fill="none" stroke="#b8b8b8" stroke-width="1"/><rect x="0.2" y="0" width="11.6" height="2.6" fill="#adadad"/><rect x="1.8" y="0" width="0.8" height="0.7" fill="#e0e0e0"/><rect x="5.2" y="0" width="0.8" height="0.7" fill="#e0e0e0"/><rect x="8.8" y="0" width="0.8" height="0.7" fill="#e0e0e0"/><text x="6.1" y="9.7" font-family="Liberation Sans" font-size="6.4" font-weight="bold" fill="#a0a0a0" text-anchor="middle">10</text></svg>
<div class="t" style="left:691.2px;top:418.14px;font-size:12px;line-height:12px;color:#1a1a1a;font-weight:400;letter-spacing:0px;-webkit-text-stroke:0.3px #1a1a1a;">14-Sep-2018</div>
<div class="r" style="left:216px;top:435px;width:579px;height:1px;background:#e4e4e4;"></div>
<svg class="r" style="left:607px;top:256px" width="9" height="18" viewBox="0 0 9 18">
<path d="M1 1.6 Q3.3 1.2 4.5 2.6 Q5.7 1.2 8 1.6 M4.5 2.6 V15.2 M1 16.4 Q3.3 16.8 4.5 15.2 Q5.7 16.8 8 16.4" fill="none" stroke="#fff" stroke-width="2.2" opacity="0.6"/>
<path d="M1 1.6 Q3.3 1.2 4.5 2.6 Q5.7 1.2 8 1.6 M4.5 2.6 V15.2 M1 16.4 Q3.3 16.8 4.5 15.2 Q5.7 16.8 8 16.4" fill="none" stroke="#111" stroke-width="1.05"/>
</svg>
</body></html>
